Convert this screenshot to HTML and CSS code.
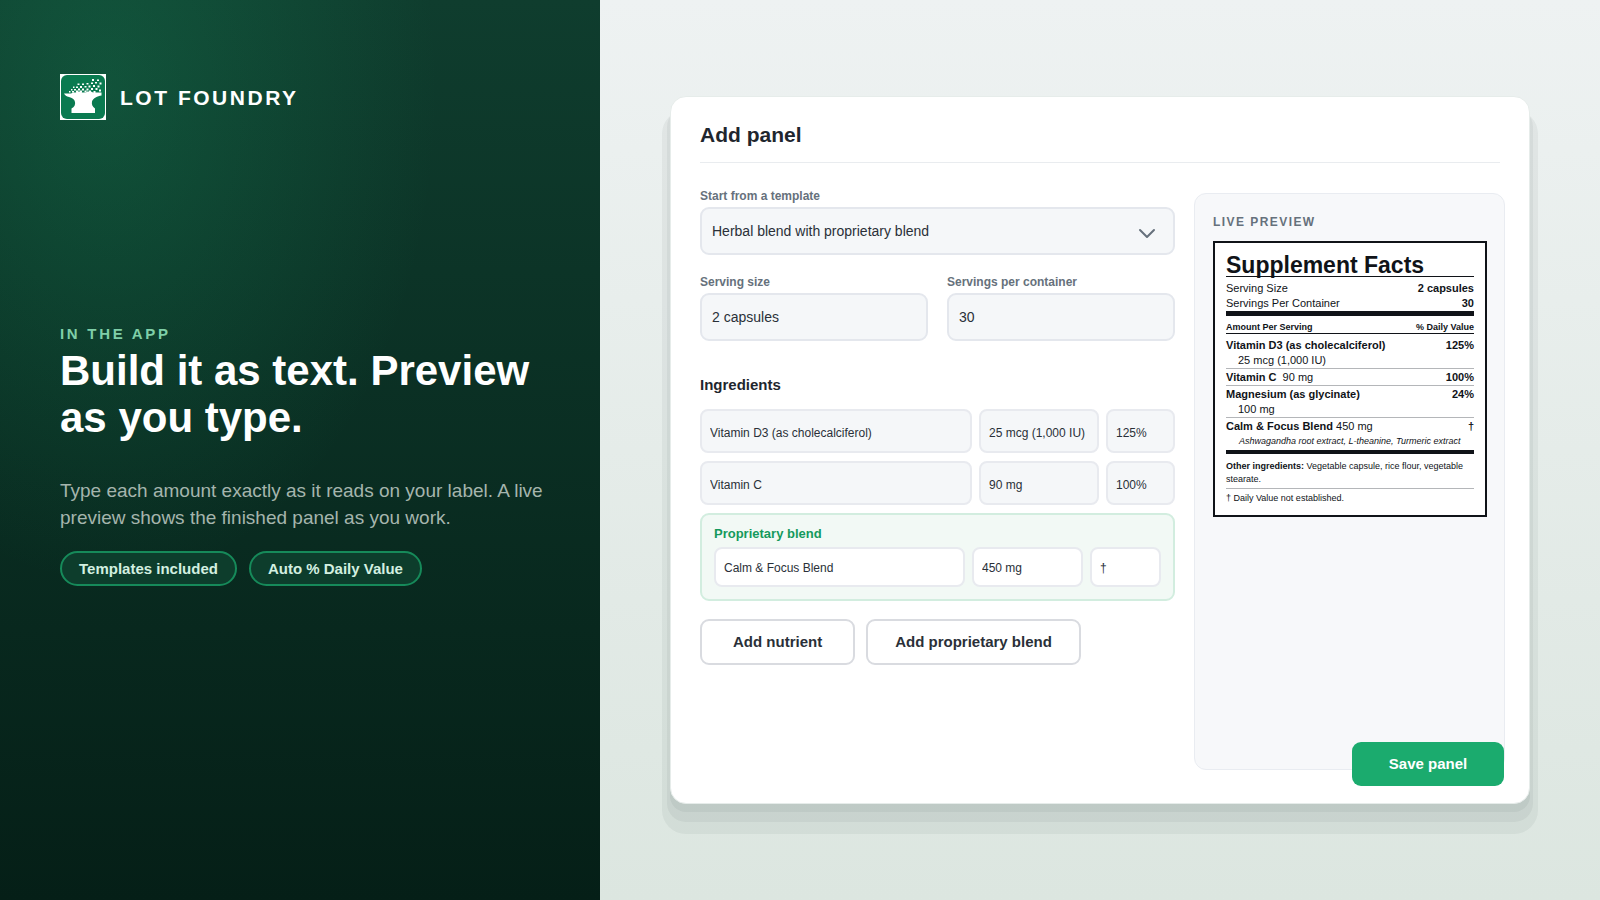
FILE: index.html
```html
<!DOCTYPE html>
<html lang="en">
<head>
    <meta charset="UTF-8">
    <meta name="viewport" content="width=device-width, initial-scale=1.0">
    <title>Lot Foundry - Add panel</title>
    <link rel="stylesheet" href="styles.css">
</head>
<body>

    <div class="page">

        <section class="intro">
            <div class="brand">
                <svg class="brand-logo" viewBox="0 0 46 46" aria-hidden="true">
                    <rect width="46" height="46" fill="#fff"/>
                    <rect x="1" y="1" width="44" height="44" rx="6" fill="#0a7a50"/>
                    <!-- anvil -->
                    <path fill="#fff" d="M4 19.500h7l2-1h3l1-1h4l1 1h4l1-1h4l2 1h8.500v3c-4 .5-8.500 2.500-9.500 6-.6 3 .5 5 3 7v4.500H11.500v-4.500c3-1.500 4-4 3.500-6.500-.5-3-3-4-6-5C6.500 22.500 5 21.500 4 19.500z"/>
                    <!-- sparks -->
                    <path fill="#fff" d="M32 5h2v2h-2zM37 5.500h2v1.500h-2zM31 8.500h2v1.500h-2zM35 8h2v1.500h-2zM39.500 8.500h2v2h-2zM26.500 9h2v1.500h-2zM22 9.500h2v1.500h-2zM17.500 9.500h2v1.500h-2zM33 11h2v2h-2zM37.500 11.500h2v2h-2zM28.500 11.500h2v2h-2zM24.500 12h2v1.500h-2zM20 12h2v2h-2zM16 12.500h2v1.500h-2zM13 12.500h1.500v1.500H13zM31 14h2v2h-2zM35.500 14h2v2h-2zM26.500 14.500h2v2h-2zM22 14.500h2v2h-2zM18 14.500h2v2h-2zM14 15h2v1.500h-2zM11 15h1.500v1.500H11zM29 16.500h2v2h-2zM24.500 16.500h2v2h-2zM20 16.500h2v2h-2zM16 16.500h2v2h-2zM12 17h2v1.500h-2zM9 17h1.500v1.500H9zM39 15.500h2v2h-2zM33.500 17h2v2h-2z"/>
                </svg>
                <span class="brand-name">LOT FOUNDRY</span>
            </div>

            <div class="hero">
                <p class="eyebrow">IN THE APP</p>
                <h1>Build it as text. Preview as you type.</h1>
                <p class="lead">Type each amount exactly as it reads on your label. A live preview shows the finished panel as you work.</p>
                <ul class="pills">
                    <li>Templates included</li>
                    <li>Auto % Daily Value</li>
                </ul>
            </div>
        </section>

        <main class="stage">
            <form class="card">
                <h2 class="card-title">Add panel</h2>

                <div class="card-body">
                    <div class="fields">
                        <div class="field">
                            <label for="template">Start from a template</label>
                            <div class="select-wrap">
                                <select id="template">
                                    <option>Herbal blend with proprietary blend</option>
                                </select>
                                <svg class="chevron" viewBox="0 0 18 12" aria-hidden="true">
                                    <path d="M2 2l7 7 7-7" fill="none" stroke="#66717c" stroke-width="2" stroke-linecap="round" stroke-linejoin="round"/>
                                </svg>
                            </div>
                        </div>

                        <div class="field-pair">
                            <div class="field">
                                <label for="size">Serving size</label>
                                <input id="size" type="text" value="2 capsules">
                            </div>
                            <div class="field">
                                <label for="count">Servings per container</label>
                                <input id="count" type="text" value="30">
                            </div>
                        </div>

                        <h3>Ingredients</h3>

                        <div class="rows">
                            <div class="row">
                                <input type="text" aria-label="Nutrient" value="Vitamin D3 (as cholecalciferol)">
                                <input type="text" aria-label="Amount" value="25 mcg (1,000 IU)">
                                <input type="text" aria-label="Daily value" value="125%">
                            </div>
                            <div class="row">
                                <input type="text" aria-label="Nutrient" value="Vitamin C">
                                <input type="text" aria-label="Amount" value="90 mg">
                                <input type="text" aria-label="Daily value" value="100%">
                            </div>
                            <div class="blend">
                                <h4>Proprietary blend</h4>
                                <div class="row blend-row">
                                    <input type="text" aria-label="Blend name" value="Calm &amp; Focus Blend">
                                    <input type="text" aria-label="Amount" value="450 mg">
                                    <input type="text" aria-label="Daily value" value="†">
                                </div>
                            </div>
                        </div>

                        <div class="actions">
                            <button class="btn" type="button">Add nutrient</button>
                            <button class="btn btn-wide" type="button">Add proprietary blend</button>
                        </div>
                    </div>

                    <aside class="preview">
                        <h3 class="preview-label">LIVE PREVIEW</h3>
                        <div class="facts">
                            <h4 class="facts-title">Supplement Facts</h4>
                            <div class="facts-serving">
                                <div><span>Serving Size</span><b>2 capsules</b></div>
                                <div><span>Servings Per Container</span><b>30</b></div>
                            </div>
                            <table class="facts-table">
                                <thead>
                                    <tr><th>Amount Per Serving</th><th>% Daily Value</th></tr>
                                </thead>
                                <tbody>
                                    <tr>
                                        <td><b>Vitamin D3 (as cholecalciferol)</b><div class="amount">25 mcg (1,000 IU)</div></td>
                                        <td>125%</td>
                                    </tr>
                                    <tr>
                                        <td><b>Vitamin C</b> <span class="inline-amount">90 mg</span></td>
                                        <td>100%</td>
                                    </tr>
                                    <tr>
                                        <td><b>Magnesium (as glycinate)</b><div class="amount">100 mg</div></td>
                                        <td>24%</td>
                                    </tr>
                                    <tr>
                                        <td><b>Calm &amp; Focus Blend</b> <span>450 mg</span></td>
                                        <td>†</td>
                                    </tr>
                                    <tr class="contents">
                                        <td colspan="2">Ashwagandha root extract, L-theanine, Turmeric extract</td>
                                    </tr>
                                </tbody>
                            </table>
                            <p class="facts-other"><b>Other ingredients:</b> Vegetable capsule, rice flour, vegetable stearate.</p>
                            <p class="facts-note">† Daily Value not established.</p>
                        </div>
                    </aside>
                </div>

                <button class="save" type="submit">Save panel</button>
            </form>
        </main>

    </div>

</body>
</html>
```

FILE: styles.css
```css
* {
    box-sizing: border-box;
    margin: 0;
    padding: 0;
}
body {
    font-family: "Liberation Sans", Arial, sans-serif;
    color: #1f262e;
}
input, select, button {
    font-family: inherit;
    color: inherit;
}
.page {
    display: grid;
    grid-template-columns: 37.5% 1fr;
    min-height: 100vh;
}

/* left side */
.intro {
    display: flex;
    flex-direction: column;
    padding: 74px 40px 110px 60px;
    background:
        radial-gradient(ellipse 55% 55% at 18% 10%, rgba(27, 171, 110, 0.22), rgba(27, 171, 110, 0)),
        linear-gradient(#0f3d2e, #051f17);
    color: #fff;
}
.brand {
    display: flex;
    align-items: center;
    gap: 14px;
}
.brand-logo {
    width: 46px;
    height: 46px;
}
.brand-name {
    padding-top: 2px;
    font-size: 21px;
    font-weight: bold;
    letter-spacing: 0.12em;
}
.hero {
    flex: 1;
    display: flex;
    flex-direction: column;
    justify-content: center;
}
.eyebrow {
    font-size: 15px;
    line-height: 18px;
    font-weight: bold;
    letter-spacing: 0.18em;
    color: #7fcfa8;
}
h1 {
    margin-top: 4px;
    font-size: 42px;
    line-height: 47px;
}
.lead {
    margin-top: 36px;
    font-size: 19px;
    line-height: 27px;
    color: #a5b5ad;
}
.pills {
    display: flex;
    flex-wrap: wrap;
    gap: 12px;
    margin-top: 20px;
    list-style: none;
}
.pills li {
    padding: 0 17px;
    border: 2px solid #168a5a;
    border-radius: 18px;
    background-color: #0d3d2c;
    font-size: 15px;
    line-height: 31px;
    font-weight: bold;
    color: #d3f0e0;
}

/* right side */
.stage {
    display: flex;
    padding: 96px 70px;
    background: linear-gradient(#eef2f2, #dce6e0);
}
.card {
    position: relative;
    flex: 1;
    display: flex;
    flex-direction: column;
    padding-bottom: 33px;
    border: 1px solid #e6ecea;
    border-radius: 16px;
    background-color: #fff;
    box-shadow:
        0 8px 0 rgba(15, 45, 40, 0.05),
        0 15px 0 3px rgba(15, 45, 40, 0.05),
        0 22px 0 8px rgba(15, 45, 40, 0.05);
}
.card-title {
    margin: 0 29px;
    padding: 26px 0 15px;
    border-bottom: 1px solid #e9ecef;
    font-size: 21px;
    line-height: 24px;
}
.card-body {
    flex: 1;
    display: grid;
    grid-template-columns: minmax(0, 1fr) 311px;
    gap: 19px;
    padding: 26px 24px 0 29px;
}
.field {
    display: flex;
    flex-direction: column;
    gap: 4px;
}
.field label {
    font-size: 12px;
    line-height: 14px;
    font-weight: bold;
    color: #66717c;
}
.field input, .field select {
    width: 100%;
    height: 48px;
    padding: 0 10px;
    border: 2px solid #e4e7ed;
    border-radius: 9px;
    background-color: #f5f7f9;
    font-size: 14px;
    color: #2a3038;
}
.select-wrap {
    position: relative;
}
.field select {
    display: block;
    appearance: none;
}
.chevron {
    position: absolute;
    right: 19px;
    top: 21px;
    width: 18px;
    height: 12px;
    pointer-events: none;
}
.field-pair {
    display: grid;
    grid-template-columns: 1fr 1fr;
    gap: 19px;
    margin-top: 20px;
}
.fields h3 {
    margin-top: 35px;
    font-size: 15px;
    line-height: 18px;
}
.rows {
    display: flex;
    flex-direction: column;
    gap: 8px;
    margin-top: 15px;
}
.row {
    display: grid;
    grid-template-columns: minmax(0, 1fr) 120px 69px;
    gap: 7px;
}
.row input {
    width: 100%;
    height: 44px;
    padding: 3px 8px 0;
    border: 2px solid #e8eaef;
    border-radius: 8px;
    background-color: #f5f7f9;
    font-size: 12px;
    color: #2a3038;
}
.blend {
    padding: 11px 12px 12px;
    border: 2px solid #d2eddf;
    border-radius: 9px;
    background-color: #f2f9f5;
}
.blend h4 {
    margin-bottom: 5px;
    font-size: 13px;
    line-height: 16px;
    color: #15995c;
}
.blend-row {
    grid-template-columns: minmax(0, 1fr) 111px 71px;
}
.blend-row input {
    height: 40px;
    padding-top: 1px;
    background-color: #fff;
}
.actions {
    display: flex;
    gap: 11px;
    margin-top: 18px;
}
.btn {
    height: 46px;
    padding: 0 31px 2px;
    border: 2px solid #d9dbe0;
    border-radius: 9px;
    background-color: #fff;
    font-size: 15px;
    font-weight: bold;
    color: #2a3038;
}
.btn-wide {
    padding: 0 27px 2px;
}
.save {
    position: absolute;
    right: 25px;
    bottom: 17px;
    width: 152px;
    height: 44px;
    padding-bottom: 2px;
    border: none;
    border-radius: 9px;
    background-color: #1bab6e;
    font-size: 15px;
    font-weight: bold;
    color: #fff;
}

/* live preview */
.preview {
    margin-top: 4px;
    padding: 21px 17px 21px 18px;
    border: 1px solid #e9ecf1;
    border-radius: 12px;
    background-color: #f7f8fa;
}
.preview-label {
    font-size: 12px;
    line-height: 14px;
    letter-spacing: 0.12em;
    color: #66717c;
}
.facts {
    margin-top: 12px;
    padding: 11px 11px 10px;
    border: 2px solid #101318;
    background-color: #fff;
    color: #101318;
    font-size: 11px;
    line-height: 15px;
}
.facts-title {
    border-bottom: 1px solid #101318;
    font-size: 23px;
    line-height: 22px;
}
.facts-serving {
    padding-top: 4px;
    border-bottom: 5px solid #101318;
}
.facts-serving div {
    display: flex;
    justify-content: space-between;
}
.facts-table {
    width: 100%;
    border-spacing: 0;
    border-bottom: 4px solid #101318;
}
.facts-table th {
    padding-top: 6px;
    border-bottom: 1px solid #101318;
    font-size: 9px;
    line-height: 11px;
    text-align: left;
}
.facts-table td {
    padding-top: 1px;
    border-bottom: 1px solid #b4b6b9;
    vertical-align: top;
}
.facts-table tr > :last-child:not(:first-child) {
    text-align: right;
    font-weight: bold;
}
.facts-table tbody tr:first-child td {
    padding-top: 4px;
}
.facts-table tbody tr:nth-last-child(-n+2) td {
    border-bottom: none;
}
.amount {
    padding-left: 12px;
}
.inline-amount {
    margin-left: 3px;
}
.facts-table .contents td {
    padding: 0 0 1px 13px;
    font-size: 9px;
    font-style: italic;
}
.facts-other {
    padding: 6px 0 2px;
    border-bottom: 1px solid #b4b6b9;
    font-size: 9px;
    line-height: 13px;
}
.facts-note {
    padding-top: 3px;
    font-size: 9px;
    line-height: 13px;
}
```
